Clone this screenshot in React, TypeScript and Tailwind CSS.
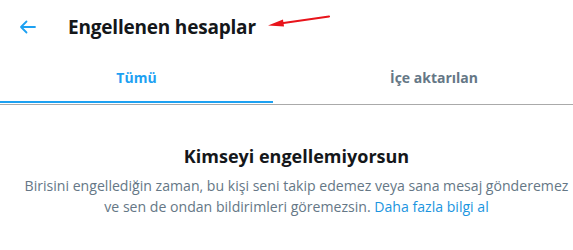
import React from 'react';

const App: React.FC = () => {
  return (
    <div className="w-[573px] h-[250px] bg-white overflow-hidden" style={{ fontFamily: '"Segoe UI", "Open Sans", sans-serif' }}>
      <div className="relative flex items-center h-[54px] px-[19px]">
        <svg width="17" height="14" viewBox="0 0 17 14" fill="none" className="shrink-0">
          <path d="M16 7H2M7.5 1.5L2 7l5.5 5.5" stroke="#1da1f2" strokeWidth="1.8" strokeLinecap="round" strokeLinejoin="round" />
        </svg>
        <h1 className="ml-[32px] text-[19px] font-bold text-[#14171a] tracking-[-0.2px]">Engellenen hesaplar</h1>
        <svg className="absolute left-[266px] top-[14px]" width="66" height="14" viewBox="0 0 66 14">
          <path d="M63 2.5L14 9.5" stroke="#e8141b" strokeWidth="2.2" strokeLinecap="round" />
          <path d="M2 11.5L17 5.5L18 12.5Z" fill="#e8141b" />
        </svg>
      </div>
      <div className="flex border-b border-[#aaaaaa]">
        <div className="w-[273px] flex flex-col items-center">
          <div className="h-[47px] flex items-center text-[14px] font-bold text-[#1da1f2]">Tümü</div>
          <div className="h-[2px] w-full bg-[#1da1f2] mb-[1px]" />
        </div>
        <div className="flex-1 flex flex-col items-center pl-[22px]">
          <div className="h-[47px] flex items-center text-[14px] font-bold text-[#657786]">İçe aktarılan</div>
        </div>
      </div>
      <div className="flex flex-col items-center pt-[39px] pl-[20px] text-center">
        <h2 className="text-[18px] font-bold text-[#14171a] leading-[25px]">Kimseyi engellemiyorsun</h2>
        <p className="mt-[6px] text-[14.1px] leading-[21px] text-[#657786] whitespace-nowrap">
          Birisini engellediğin zaman, bu kişi seni takip edemez veya sana mesaj gönderemez
          <br />
          ve sen de ondan bildirimleri göremezsin.{' '}
          <span className="text-[#1b95e0]">Daha fazla bilgi al</span>
        </p>
      </div>
    </div>
  );
};

export default App;
